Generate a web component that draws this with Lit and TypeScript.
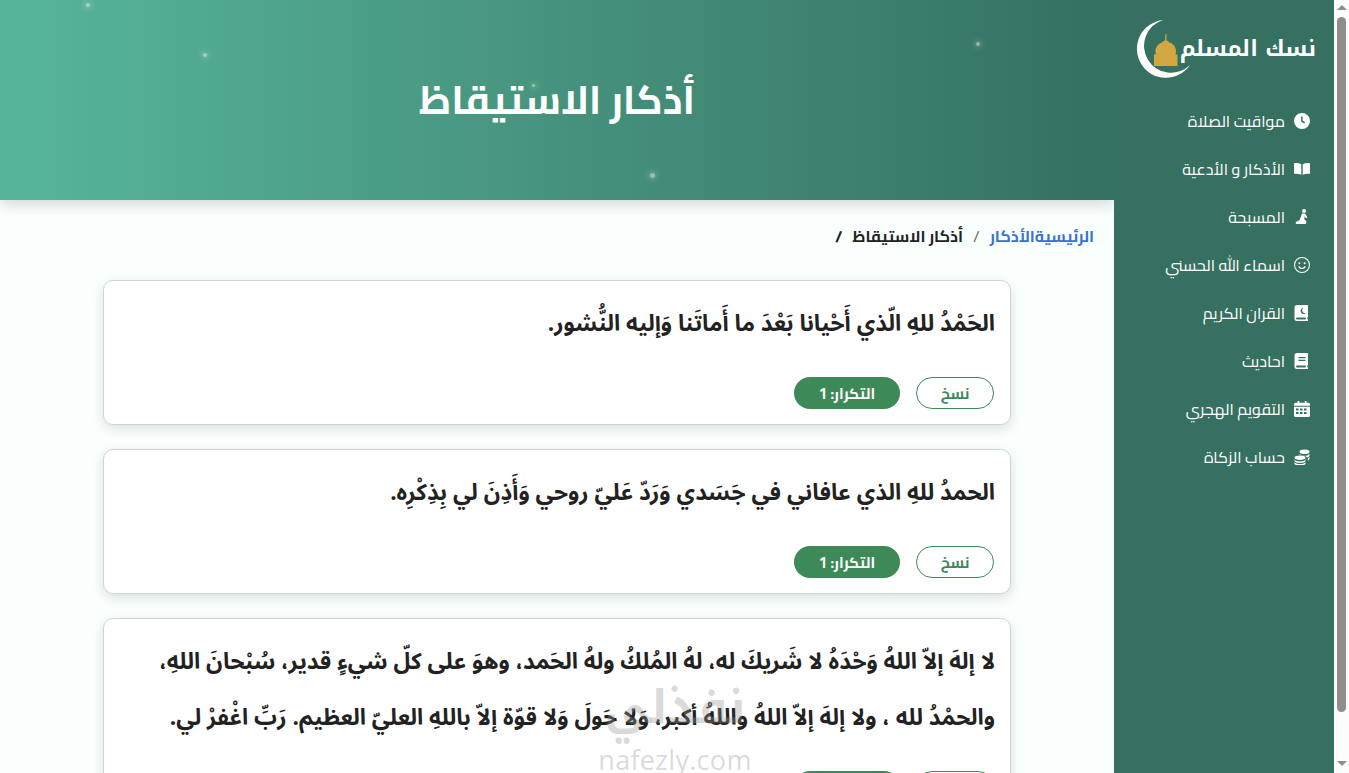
import { LitElement, html, css, svg } from "lit";
import { customElement } from "lit/decorators.js";

const ICONS = [
  svg`<path fill-rule="evenodd" d="M8 0a8 8 0 1 1 0 16A8 8 0 0 1 8 0Zm-.9 3.500v4.900l3 2.100.9-1.200-2.400-1.700V3.500Z"/>`,
  svg`<path d="M0 2.200c2.400-.4 5-.2 7.300 1v10.600C5 12.700 2.400 12.500 0 12.800ZM16 2.200c-2.400-.4-5-.2-7.300 1v10.600c2.300-1.100 4.900-1.300 7.300-1Z"/>`,
  svg`<circle cx="10" cy="2" r="2"/><path d="M8 4.500h2.600c.5 0 .9.300 1.100.7l1.700 3.200-1.400.8-1.200-2-.6 3 1.600 1.200c1.200.9.600 3.600-.8 3.600H2.800c-1.200 0-1.600-1.600-.5-2.200l3.200-1.600Z"/>`,
  svg`<path fill-rule="evenodd" d="M8 0a8 8 0 1 1 0 16A8 8 0 0 1 8 0Zm0 1.100a6.900 6.900 0 1 0 0 13.800A6.900 6.900 0 0 0 8 1.100Z"/><circle cx="5.400" cy="6.300" r="1"/><circle cx="10.600" cy="6.300" r="1"/><path d="M4.200 9.400l1-.4c.7 1.200 1.700 1.800 2.800 1.800s2.100-.6 2.800-1.800l1 .4C11.100 11.200 9.600 12.100 8 12.100s-3.100-.9-3.800-2.700Z"/>`,
  svg`<path fill-rule="evenodd" d="M3 0h11v11.500c0 .5-.3.900-.7 1.100v1.700h.7V16H3a2.500 2.500 0 0 1-2.500-2.500v-11A2.500 2.500 0 0 1 3 0Zm0 12.500a1 1 0 0 0 0 2h8.800v-2ZM9.700 3a3 3 0 1 0 2.300 4.700 2.500 2.500 0 1 1-2.300-4.700Z"/>`,
  svg`<path fill-rule="evenodd" d="M3 0h11v11.500c0 .5-.3.900-.7 1.100v1.700h.7V16H3a2.500 2.500 0 0 1-2.500-2.500v-11A2.500 2.500 0 0 1 3 0Zm0 12.500a1 1 0 0 0 0 2h8.800v-2ZM4.500 4v1.300h7V4Zm0 2.700V8h7V6.700Z"/>`,
  svg`<path fill-rule="evenodd" d="M3.500 0h1.800v1.800h5.400V0h1.800v1.800h2A1.500 1.500 0 0 1 16 3.300v1.500H0V3.300a1.500 1.500 0 0 1 1.500-1.500h2ZM0 5.800h16v8.700a1.500 1.500 0 0 1-1.500 1.500h-13A1.500 1.500 0 0 1 0 14.500Zm2 1.700v2h2.500v-2Zm4 0v2h2.500v-2Zm4 0v2h2.500v-2Zm-8 3.500v2h2.500v-2Zm4 0v2h2.500v-2Zm4 0v2h2.500v-2Z"/>`,
  svg`<ellipse cx="10.500" cy="2.700" rx="5" ry="2.300"/><path d="M5.700 5c.6 1.300 2.700 2 4.800 2 2.300 0 4.500-.9 5-2.400v1.700c0 1-.9 1.800-2.300 2.300-1.300-1.600-4.300-2.500-7.500-2.300ZM13.800 9.100c.8-.3 1.300-.6 1.700-1.100v1.500c0 .9-.7 1.600-1.700 2.100Z"/><ellipse cx="6" cy="8.700" rx="5.500" ry="2.300"/><path d="M.5 10.200C1 11.800 3.300 12.400 6 12.400s5-.7 5.500-2.200v1.600c0 1.300-2.500 2.300-5.500 2.300s-5.500-1-5.500-2.300ZM.5 13C1 14.400 3.300 15 6 15s5-.6 5.500-2v1.400c0 1.200-2.500 2.100-5.500 2.100S.5 15.600.5 14.400Z"/>`,
];

const NAV = [
  "مواقيت الصلاة",
  "الأذكار و الأدعية",
  "المسبحة",
  "اسماء الله الحسني",
  "القران الكريم",
  "احاديث",
  "التقويم الهجري",
  "حساب الزكاة",
];

const CARDS = [
  "الحَمْدُ للهِ الّذي أَحْيانا بَعْدَ ما أَماتَنا وَإليه النُّشور.",
  "الحمدُ للهِ الذي عافاني في جَسَدي وَرَدّ عَليّ روحي وَأَذِنَ لي بِذِكْرِه.",
  "لا إلهَ إلاّ اللهُ وَحْدَهُ لا شَريكَ له، لهُ المُلكُ ولهُ الحَمد، وهوَ على كلّ شيءٍ قدير، سُبْحانَ اللهِ، والحمْدُ لله ، ولا إلهَ إلاّ اللهُ واللهُ أكبر، وَلا حَولَ وَلا قوّة إلاّ باللهِ العليّ العظيم. رَبِّ اغْفرْ لي.",
];

const STARS = [
  [88, 5, 4],
  [205, 55, 4],
  [533, 85, 3],
  [652, 175, 5],
  [978, 44, 4],
];

@customElement("app-root")
export class AppRoot extends LitElement {
  static styles = css`
    :host {
      display: flex;
      direction: rtl;
      position: relative;
      font-family: "Cairo", "DejaVu Sans", sans-serif;
      background: #f8fffd;
      color: #222;
    }
    .scrollbar {
      width: 15px;
      height: 773px;
      flex: none;
      background: #fdfcfc;
      display: flex;
      flex-direction: column;
      align-items: center;
      padding: 5px 0 7px;
      box-sizing: border-box;
    }
    .arrow-up,
    .arrow-down {
      width: 0;
      height: 0;
      border-left: 5px solid transparent;
      border-right: 5px solid transparent;
    }
    .arrow-up {
      border-bottom: 5px solid #8f8c8c;
      margin-bottom: 7px;
    }
    .arrow-down {
      border-top: 5px solid #8f8c8c;
      margin-top: auto;
    }
    .thumb {
      width: 9px;
      height: 695px;
      background: #8f8c8c;
      border-radius: 5px;
    }
    .sidebar {
      width: 220px;
      flex: none;
      background: #357060;
      color: #fff;
      padding: 20px 0 0;
      box-sizing: border-box;
      position: relative;
      z-index: 1;
    }
    .logo {
      display: flex;
      align-items: center;
      height: 58px;
      padding-right: 18px;
      margin-bottom: 19px;
    }
    .logo-text {
      font-family: "Noto Kufi Arabic", "Cairo", sans-serif;
      font-size: 22px;
      font-weight: 700;
      line-height: 1;
      white-space: nowrap;
      position: relative;
      z-index: 1;
    }
    .logo svg {
      margin-right: -12px;
      flex: none;
    }
    nav {
      display: flex;
      flex-direction: column;
    }
    .item {
      display: flex;
      align-items: center;
      gap: 9px;
      height: 48px;
      padding-right: 24px;
      font-size: 16px;
      white-space: nowrap;
    }
    .item svg {
      width: 16px;
      height: 16px;
      fill: #fff;
      flex: none;
    }
    main {
      flex: 1;
      min-width: 0;
      padding-bottom: 24px;
    }
    header {
      height: 200px;
      position: relative;
      display: flex;
      align-items: center;
      justify-content: center;
      background: linear-gradient(270deg, #357060 0%, #57b69a 100%);
      box-shadow: 0 4px 14px rgba(0, 0, 0, 0.16);
      overflow: hidden;
    }
    h1 {
      margin: 0;
      font-size: 40px;
      font-weight: 700;
      color: #fff;
      line-height: 1.2;
    }
    .star {
      position: absolute;
      border-radius: 50%;
      background: rgba(255, 255, 255, 0.45);
      box-shadow: 0 0 5px 2px rgba(255, 255, 255, 0.18);
    }
    .crumbs {
      display: flex;
      align-items: center;
      height: 72px;
      margin-bottom: 8px;
      padding: 0 20px;
      font-size: 16px;
      font-weight: 700;
      color: #222;
      white-space: nowrap;
    }
    .crumbs a {
      color: #3b6fd8;
      text-decoration: none;
    }
    .sep {
      color: #666;
      font-weight: 400;
      padding: 0 10px;
    }
    .sep-end {
      color: #222;
      font-weight: 700;
      padding-right: 10px;
    }
    .cards {
      display: flex;
      flex-direction: column;
      gap: 24px;
      padding: 0 103px;
    }
    .card {
      background: #fff;
      border: 1px solid #d2d5d4;
      border-radius: 10px;
      box-shadow: 0 4px 12px rgba(0, 0, 0, 0.12);
      padding: 15px;
    }
    .text {
      margin: 0 0 25px;
      font-family: "Noto Sans Arabic", "DejaVu Sans", sans-serif;
      font-size: 22.700px;
      font-weight: 700;
      line-height: 56px;
      color: #222;
    }
    .actions {
      display: flex;
      gap: 16px;
      padding-right: 1px;
    }
    .btn {
      height: 32px;
      box-sizing: border-box;
      border-radius: 16px;
      display: flex;
      align-items: center;
      justify-content: center;
      font-size: 15px;
      font-weight: 700;
    }
    .copy {
      width: 78px;
      border: 1px solid #3e8958;
      color: #3e8958;
      background: #fff;
    }
    .count {
      width: 106px;
      background: #3e8958;
      color: #fff;
    }
    .mark {
      position: absolute;
      left: 590px;
      top: 685px;
      width: 170px;
      text-align: center;
      color: rgba(150, 150, 150, 0.36);
      pointer-events: none;
      line-height: 1;
      z-index: 2;
    }
    .mark-ar {
      font-family: "Noto Kufi Arabic", "Cairo", sans-serif;
      font-size: 46px;
      font-weight: 700;
      height: 61px;
    }
    .mark-en {
      direction: ltr;
      font-family: "Open Sans", sans-serif;
      font-size: 27px;
      letter-spacing: 0.3px;
    }
  `;

  render() {
    return html`
      <div class="scrollbar" aria-hidden="true">
        <i class="arrow-up"></i><i class="thumb"></i><i class="arrow-down"></i>
      </div>
      <aside class="sidebar">
        <div class="logo">
          <span class="logo-text">نسك المسلم</span>
          <svg width="58" height="58" viewBox="0 0 58 58">
            <path fill="#fff" d="M29 0A29 29 0 1 0 56 45A27 27 0 1 1 29 0Z" />
            <path
              fill="#d2a741"
              d="M31.500 14h1v6.500c1.300.3 2.200 1 2.800 2 4.400 1.200 6.700 4.400 6.700 8.800 0 1.100-.2 2.200-.5 3.200h2V46H20V34.500h2c-.3-1-.5-2.100-.5-3.200 0-4.400 2.300-7.600 6.700-8.800.6-1 1.500-1.700 2.800-2Z"
            />
          </svg>
        </div>
        <nav>
          ${NAV.map(
            (label, i) => html`<div class="item">
              <svg viewBox="0 0 16 16">${ICONS[i]}</svg><span>${label}</span>
            </div>`
          )}
        </nav>
      </aside>
      <main>
        <header>
          ${STARS.map(
            ([x, y, s]) =>
              html`<i
                class="star"
                style="left:${x - s / 2}px;top:${y - s / 2}px;width:${s}px;height:${s}px"
              ></i>`
          )}
          <h1>أذكار الاستيقاظ</h1>
        </header>
        <div class="crumbs">
          <a>الرئيسية</a><a>الأذكار</a><span class="sep">/</span
          ><span>أذكار الاستيقاظ</span><span class="sep-end">/</span>
        </div>
        <div class="cards">
          ${CARDS.map(
            (t) => html`<article class="card">
              <p class="text">${t}</p>
              <div class="actions">
                <div class="btn copy">نسخ</div>
                <div class="btn count">التكرار: 1</div>
              </div>
            </article>`
          )}
        </div>
      </main>
      <div class="mark">
        <div class="mark-ar">نفذلي</div>
        <div class="mark-en">nafezly.com</div>
      </div>
    `;
  }
}
